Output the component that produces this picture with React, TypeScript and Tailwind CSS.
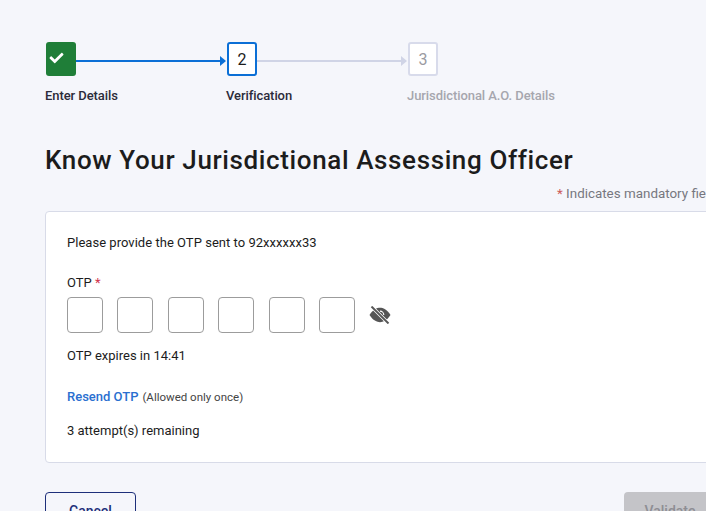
import { FaCheck } from 'react-icons/fa';

const otpBoxes = [0, 1, 2, 3, 4, 5];

function Connector({ done }: { done?: boolean }) {
  return (
    <div className="mt-[3px] flex w-[151px] items-center">
      <div className={`h-[2px] flex-1 ${done ? 'bg-[#0b6fd6]' : 'bg-[#d0d4e6]'}`} />
      <svg width="6" height="10" viewBox="0 0 6 10" className="mr-[1px]">
        <path d="M0 0l6 5-6 5z" fill={done ? '#0b6fd6' : '#d0d4e6'} />
      </svg>
    </div>
  );
}

function EyeOff() {
  return (
    <svg width="22" height="18" viewBox="0 0 22 18">
      <path d="M0.5 9C4 3.6 8 1.8 11 1.8S18 3.6 21.5 9c-3.5 5.4-7.5 7.2-10.5 7.2S4 14.4 0.5 9z" fill="#555555" />
      <path d="M11 5.2a3.8 3.8 0 0 1 3.8 3.8" fill="none" stroke="#ffffff" strokeWidth="1.2" />
      <path d="M2.5 0.5L19.5 17.5" stroke="#ffffff" strokeWidth="3.4" />
      <path d="M2.5 0.5L19.5 17.5" stroke="#555555" strokeWidth="1.9" />
    </svg>
  );
}

export default function App() {
  return (
    <div className="relative h-[511px] w-[706px] overflow-hidden bg-[#f5f6fb] font-['Roboto',sans-serif] text-[#1c1c1c]">
      <div className="ml-[45px] w-[671px] pt-[42px]">
        {/* Stepper */}
        <div className="ml-[1px] flex h-[34px] items-stretch">
          <div className="flex w-[30px] items-center rounded-[3px] bg-[#1f7e38] pb-[3px] pl-[2px] text-white">
            <FaCheck className="h-[14px] w-[17px]" />
          </div>
          <Connector done />
          <div className="flex w-[30px] items-center justify-center rounded-[3px] border-2 border-[#0b6fd6] bg-white pt-[1px] text-[16px]">
            2
          </div>
          <Connector />
          <div className="flex w-[30px] items-center justify-center rounded-[3px] border-2 border-[#d8dbeb] bg-white pt-[1px] text-[16px] text-[#9a9aa2]">
            3
          </div>
        </div>
        <div className="mt-[11px] flex h-[18px] text-[13px] leading-[18px] font-medium tracking-[-0.07px]">
          <div className="w-[181px] text-[#2b2b3a]">Enter Details</div>
          <div className="w-[181px] text-[#2b2b3a]">Verification</div>
          <div className="whitespace-nowrap text-[#a6a6ae]">Jurisdictional A.O. Details</div>
        </div>

        <h1 className="mt-[37px] h-[36px] whitespace-nowrap text-[26px] leading-[36px] font-medium tracking-[0.62px] text-[#1c1c1c]">
          Know Your Jurisdictional Assessing Officer
        </h1>

        <p className="mt-[6px] h-[20px] whitespace-nowrap pl-[512px] text-[13.4px] leading-[20px] text-[#77787f]">
          <span className="text-[#cc5a5a]">*</span> Indicates mandatory fields
        </p>

        {/* OTP card */}
        <div className="mt-[7px] h-[252px] rounded-[4px] border border-[#d8dbe8] bg-white px-[21px] pt-[22px]">
          <p className="h-[18px] text-[13px] leading-[18px] tracking-[0.03px]">
            Please provide the OTP sent to 92xxxxxx33
          </p>
          <label className="mt-[22px] block h-[18px] text-[13px] leading-[18px]">
            OTP <span className="text-[#d1344b]">*</span>
          </label>
          <div className="mt-[5px] flex items-center gap-[14.4px]">
            {otpBoxes.map((i) => (
              <div key={i} className="h-[36px] w-[36px] rounded-[4px] border border-[#9c9c9c] bg-white" />
            ))}
            <EyeOff />
          </div>
          <p className="mt-[14px] h-[18px] text-[13px] leading-[18px]">OTP expires in 14:41</p>
          <p className="mt-[22px] h-[18px] leading-[18px]">
            <span className="text-[13px] font-medium text-[#2a6fd0]">Resend OTP</span>{' '}
            <span className="text-[11.5px] text-[#444444]">(Allowed only once)</span>
          </p>
          <p className="mt-[17px] h-[18px] text-[13px] leading-[18px]">3 attempt(s) remaining</p>
        </div>

        {/* Actions */}
        <div className="mt-[29px] flex justify-between">
          <button className="h-[38px] w-[91px] rounded-[4px] border border-[#1d2f7a] text-[14px] font-medium text-[#1d2f7a]">
            Cancel
          </button>
          <button className="h-[38px] w-[92px] rounded-[4px] bg-[#c4c4c8] text-[14px] font-medium text-[#8e8e94]">
            Validate
          </button>
        </div>
      </div>
    </div>
  );
}
